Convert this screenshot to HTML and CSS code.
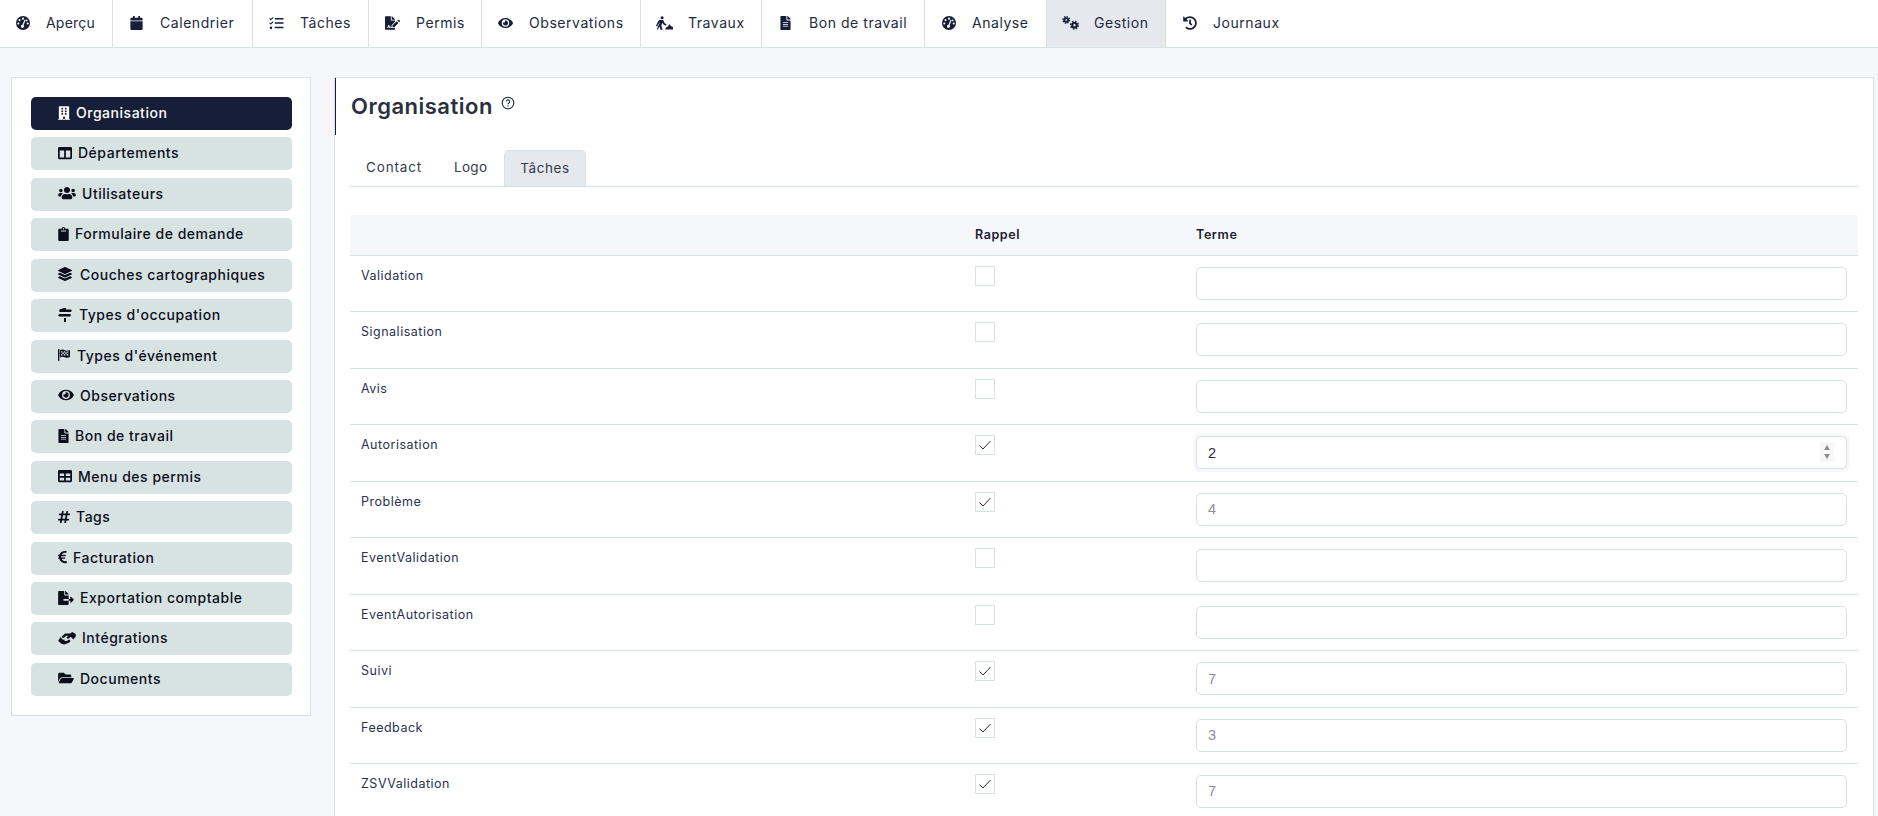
FILE: index.html
```html
<!DOCTYPE html>
<html lang="fr">
<head>
<meta charset="utf-8">
<title>Organisation</title>
<link rel="stylesheet" href="styles.css">
</head>
<body>
<nav class="topnav">
  <a class="toptab toptab-first"><span class="topicon"><svg class="ic w14" viewBox="0 0 512 512"><circle cx="256" cy="256" r="256" fill="currentColor"/><g fill="#fff"><circle cx="256" cy="96" r="38"/><circle cx="130" cy="150" r="38"/><circle cx="84" cy="276" r="38"/><circle cx="428" cy="276" r="38"/><circle cx="388" cy="160" r="34"/><path d="M236 320l80-190 36 14-74 192a56 56 0 1 1-42-16z"/></g></svg></span>Aperçu</a>
  <a class="toptab"><span class="topicon"><svg class="ic" viewBox="0 0 448 512"><path d="M12 192h424c6.6 0 12 5.4 12 12v260c0 26.5-21.5 48-48 48H48c-26.5 0-48-21.5-48-48V204c0-6.6 5.4-12 12-12zm436-44v-36c0-26.5-21.500-48-48-48h-48V12c0-6.600-5.400-12-12-12h-40c-6.600 0-12 5.400-12 12v52H160V12c0-6.600-5.400-12-12-12h-40c-6.600 0-12 5.400-12 12v52H48C21.500 64 0 85.500 0 112v36c0 6.600 5.400 12 12 12h424c6.600 0 12-5.400 12-12z"/></svg></span>Calendrier</a>
  <a class="toptab"><span class="topicon"><svg class="ic" viewBox="0 0 512 512"><path d="M18 76l30 30 72-72 28 28-100 100-58-58zM18 236l30 30 72-72 28 28-100 100-58-58z"/><circle cx="52" cy="434" r="46"/><path d="M192 72h320v56H192zM192 228h320v56H192zM192 396h320v56H192z"/></svg></span>Tâches</a>
  <a class="toptab"><span class="topicon"><svg class="ic" viewBox="0 0 576 512"><path d="M218.170 424.140c-2.950-5.920-8.090-6.520-10.170-6.520s-7.220.590-10.020 6.190l-7.670 15.340c-6.370 12.780-25.030 11.370-29.480-2.090L144 386.590l-10.610 31.880c-5.890 17.660-22.380 29.530-41 29.530H80c-8.840 0-16-7.160-16-16s7.160-16 16-16h12.390c4.830 0 9.110-3.080 10.640-7.660l18.190-54.640c3.300-9.810 12.440-16.410 22.780-16.410s19.480 6.590 22.770 16.410l13.880 41.640c19.750-16.190 54.060-9.700 66 14.160 1.890 3.780 5.490 5.950 9.360 6.260v-82.120l128-127.090V160H248c-13.200 0-24-10.800-24-24V0H24C10.700 0 0 10.700 0 24v464c0 13.300 10.700 24 24 24h336c13.300 0 24-10.700 24-24v-40l-128-.11c-16.120-.31-30.580-9.280-37.830-23.750zM384 121.900c0-6.300-2.500-12.400-7-16.900L279.100 7c-4.500-4.500-10.600-7-17-7H256v128h128v-6.100zm-96 225.060V416h68.990l161.680-162.780-67.880-67.880L288 346.960zm280.540-179.630l-31.870-31.870c-9.940-9.940-26.070-9.940-36.010 0l-27.250 27.250 67.880 67.880 27.250-27.250c9.950-9.940 9.950-26.070 0-36.010z"/></svg></span>Permis</a>
  <a class="toptab"><span class="topicon"><svg class="ic" viewBox="0 0 576 512"><use href="#i-eye"/></svg></span>Observations</a>
  <a class="toptab"><span class="topicon"><svg class="ic w16" viewBox="0 0 640 512"><circle cx="230" cy="60" r="58"/><path d="M120 140h150l50 120 80 50-26 50-100-60-30-50-44 100 50 162h-76l-56-150 22-120-44 40-46 110-50-26 60-140zM30 500l90-220 40 20-84 200zM500 290l50 70 90 60v82H340l50-82 60-30z"/></svg></span>Travaux</a>
  <a class="toptab"><span class="topicon"><svg class="ic" viewBox="0 0 384 512"><use href="#i-file"/></svg></span>Bon de travail</a>
  <a class="toptab"><span class="topicon"><svg class="ic w14" viewBox="0 0 512 512"><circle cx="256" cy="256" r="256" fill="currentColor"/><g fill="#fff"><circle cx="256" cy="96" r="38"/><circle cx="130" cy="150" r="38"/><circle cx="84" cy="276" r="38"/><circle cx="428" cy="276" r="38"/><circle cx="388" cy="160" r="34"/><path d="M236 320l80-190 36 14-74 192a56 56 0 1 1-42-16z"/></g></svg></span>Analyse</a>
  <a class="toptab is-active"><span class="topicon"><svg class="ic w16" viewBox="0 0 640 512"><g fill="none" stroke="currentColor"><circle cx="160" cy="140" r="70" stroke-width="70"/><circle cx="160" cy="140" r="120" stroke-width="60" stroke-dasharray="50 44"/><circle cx="470" cy="340" r="84" stroke-width="80"/><circle cx="470" cy="340" r="140" stroke-width="60" stroke-dasharray="58 52"/></g></svg></span>Gestion</a>
  <a class="toptab"><span class="topicon"><svg class="ic w14" viewBox="0 0 512 512"><path d="M504 255.531c.253 136.640-111.180 248.372-247.820 248.468-59.015.042-113.223-20.530-155.822-54.911-11.077-8.940-11.905-25.541-1.839-35.607l11.267-11.267c8.609-8.609 22.353-9.551 31.891-1.984C173.062 425.135 212.781 440 256 440c101.705 0 184-82.311 184-184 0-101.705-82.311-184-184-184-48.814 0-93.149 18.969-126.068 49.932l50.754 50.754c10.080 10.080 2.941 27.314-11.313 27.314H24c-8.837 0-16-7.163-16-16V38.627c0-14.254 17.234-21.393 27.314-11.314l49.372 49.372C129.209 34.136 189.552 8 256 8c136.810 0 247.747 110.780 248 247.531zm-180.912 78.784l9.823-12.630c8.138-10.463 6.253-25.542-4.210-33.679L288 256.349V152c0-13.255-10.745-24-24-24h-16c-13.255 0-24 10.745-24 24v135.651l65.409 50.874c10.463 8.137 25.541 6.253 33.679-4.210z"/></svg></span>Journaux</a>
</nav>

<svg class="sprite" aria-hidden="true">
  <symbol id="i-eye" viewBox="0 0 576 512"><path d="M572.520 241.400C518.290 135.590 410.930 64 288 64S57.680 135.640 3.480 241.410a32.350 32.350 0 0 0 0 29.190C57.710 376.410 165.070 448 288 448s230.320-71.640 284.520-177.410a32.350 32.350 0 0 0 0-29.190zM288 400a144 144 0 1 1 144-144 143.930 143.930 0 0 1-144 144zm0-240a95.310 95.310 0 0 0-25.310 3.790 47.850 47.850 0 0 1-66.900 66.900A95.780 95.780 0 1 0 288 160z"/></symbol>
  <symbol id="i-file" viewBox="0 0 384 512"><path d="M224 136V0H24C10.700 0 0 10.700 0 24v464c0 13.300 10.700 24 24 24h336c13.300 0 24-10.700 24-24V160H248c-13.200 0-24-10.800-24-24zm64 236c0 6.600-5.400 12-12 12H108c-6.600 0-12-5.400-12-12v-8c0-6.600 5.400-12 12-12h168c6.600 0 12 5.400 12 12v8zm0-64c0 6.600-5.400 12-12 12H108c-6.600 0-12-5.400-12-12v-8c0-6.600 5.400-12 12-12h168c6.600 0 12 5.400 12 12v8zm0-72v8c0 6.600-5.400 12-12 12H108c-6.600 0-12-5.400-12-12v-8c0-6.600 5.400-12 12-12h168c6.600 0 12 5.400 12 12zm96-114.100v6.100H256V0h6.100c6.400 0 12.500 2.500 17 7l97.900 98c4.500 4.500 7 10.600 7 16.900z"/></symbol>
</svg>

<div class="content">
  <aside class="sidebar">
    <a class="sidelink is-active"><svg class="si w12" viewBox="0 0 448 512"><path d="M436 480h-20V24c0-13.255-10.745-24-24-24H56C42.745 0 32 10.745 32 24v456H12c-6.627 0-12 5.373-12 12v20h448v-20c0-6.627-5.373-12-12-12zM128 76c0-6.627 5.373-12 12-12h40c6.627 0 12 5.373 12 12v40c0 6.627-5.373 12-12 12h-40c-6.627 0-12-5.373-12-12V76zm0 96c0-6.627 5.373-12 12-12h40c6.627 0 12 5.373 12 12v40c0 6.627-5.373 12-12 12h-40c-6.627 0-12-5.373-12-12v-40zm52 148h-40c-6.627 0-12-5.373-12-12v-40c0-6.627 5.373-12 12-12h40c6.627 0 12 5.373 12 12v40c0 6.627-5.373 12-12 12zm76 160h-64v-84c0-6.627 5.373-12 12-12h40c6.627 0 12 5.373 12 12v84zm64-172c0 6.627-5.373 12-12 12h-40c-6.627 0-12-5.373-12-12v-40c0-6.627 5.373-12 12-12h40c6.627 0 12 5.373 12 12v40zm0-96c0 6.627-5.373 12-12 12h-40c-6.627 0-12-5.373-12-12v-40c0-6.627 5.373-12 12-12h40c6.627 0 12 5.373 12 12v40zm0-96c0 6.627-5.373 12-12 12h-40c-6.627 0-12-5.373-12-12V76c0-6.627 5.373-12 12-12h40c6.627 0 12 5.373 12 12v40z"/></svg>Organisation</a>
    <a class="sidelink"><svg class="si w14" viewBox="0 0 512 512"><path d="M464 32H48C21.490 32 0 53.490 0 80v352c0 26.510 21.490 48 48 48h416c26.510 0 48-21.490 48-48V80c0-26.510-21.490-48-48-48zM224 416H64V160h160v256zm224 0H288V160h160v256z"/></svg>Départements</a>
    <a class="sidelink"><svg class="si w17" viewBox="0 0 640 512"><path d="M96 224c35.300 0 64-28.700 64-64s-28.700-64-64-64-64 28.700-64 64 28.700 64 64 64zm448 0c35.300 0 64-28.700 64-64s-28.700-64-64-64-64 28.700-64 64 28.700 64 64 64zm32 32h-64c-17.600 0-33.500 7.100-45.100 18.600 40.300 22.100 68.900 62 75.100 109.400h66c17.700 0 32-14.300 32-32v-32c0-35.300-28.700-64-64-64zm-256 0c61.900 0 112-50.100 112-112S381.900 32 320 32 208 82.100 208 144s50.100 112 112 112zm76.800 32h-8.300c-20.800 10-43.900 16-68.500 16s-47.600-6-68.500-16h-8.300C179.600 288 128 339.600 128 403.200V432c0 26.500 21.500 48 48 48h288c26.500 0 48-21.500 48-48v-28.800c0-63.600-51.600-115.200-115.200-115.200zm-223.700-13.400C161.500 263.100 145.600 256 128 256H64c-35.300 0-64 28.700-64 64v32c0 17.700 14.300 32 32 32h65.900c6.300-47.400 34.900-87.300 75.200-109.400z"/></svg>Utilisateurs</a>
    <a class="sidelink"><svg class="si w11" viewBox="0 0 384 512"><path d="M384 112v352c0 26.510-21.490 48-48 48H48c-26.510 0-48-21.490-48-48V112c0-26.510 21.490-48 48-48h80c0-35.290 28.710-64 64-64s64 28.710 64 64h80c26.510 0 48 21.490 48 48zM192 40c-13.255 0-24 10.745-24 24s10.745 24 24 24 24-10.745 24-24-10.745-24-24-24m96 114v-20a6 6 0 0 0-6-6H102a6 6 0 0 0-6 6v20a6 6 0 0 0 6 6h180a6 6 0 0 0 6-6z"/></svg>Formulaire de demande</a>
    <a class="sidelink"><svg class="si w14 wide-gap" viewBox="0 0 512 512"><path d="M12.410 148.020l232.940 105.670c6.800 3.090 14.490 3.090 21.290 0l232.940-105.670c16.550-7.510 16.550-32.520 0-40.030L266.650 2.310a25.607 25.607 0 0 0-21.290 0L12.410 107.980c-16.550 7.510-16.550 32.530 0 40.040zm487.180 88.280l-58.090-26.330-161.640 73.270c-7.560 3.430-15.590 5.170-23.860 5.170s-16.290-1.740-23.860-5.170L70.510 209.970l-58.100 26.330c-16.550 7.500-16.550 32.500 0 40l232.940 105.590c6.800 3.080 14.490 3.080 21.290 0L499.590 276.300c16.550-7.500 16.550-32.500 0-40zm0 127.800l-57.870-26.230-161.860 73.370c-7.560 3.430-15.590 5.170-23.860 5.170s-16.290-1.740-23.860-5.170L70.290 337.870 12.410 364.100c-16.550 7.500-16.550 32.500 0 40l232.940 105.590c6.800 3.080 14.490 3.080 21.290 0L499.590 404.100c16.550-7.500 16.550-32.500 0-40z"/></svg>Couches cartographiques</a>
    <a class="sidelink"><svg class="si w14 near-gap" viewBox="0 0 512 512"><path d="M220 0h72v56h170l50 46-50 46H50V56h0zM0 264l50-46h412v92H50zM220 364h72v148h-72z"/><path d="M220 56h72v10h-72z"/></svg>Types d'occupation</a>
    <a class="sidelink"><svg class="si w12 near-gap" viewBox="0 0 512 512"><path fill-rule="evenodd" d="M0 0h56v512H0zM80 50c80-40 150-30 210 0s120 30 222-10v300c-90 45-160 40-222 10s-130-30-210 10zM130 92v60h60v-60zm120 0v60h60v-60zm120 10v60h70v-60zM190 152v60h60v-60zm120 0v60h60v-60zM130 212v60h60v-60zm120 0v60h60v-60zm120 0v60h70v-60z"/></svg>Types d'événement</a>
    <a class="sidelink"><svg class="si w16" viewBox="0 0 576 512"><use href="#i-eye"/></svg>Observations</a>
    <a class="sidelink"><svg class="si w11" viewBox="0 0 384 512"><use href="#i-file"/></svg>Bon de travail</a>
    <a class="sidelink"><svg class="si w14" viewBox="0 0 512 512"><path d="M464 32H48C21.490 32 0 53.490 0 80v352c0 26.510 21.490 48 48 48h416c26.510 0 48-21.490 48-48V80c0-26.510-21.490-48-48-48zM224 416H64v-96h160v96zm0-160H64v-96h160v96zm224 160H288v-96h160v96zm0-160H288v-96h160v96z"/></svg>Menu des permis</a>
    <a class="sidelink"><svg class="si w12" viewBox="0 0 448 512"><path d="M440.667 182.109l7.143-40c1.313-7.355-4.342-14.109-11.813-14.109h-74.810l14.623-81.891C377.123 38.754 371.468 32 363.997 32h-40.632a12 12 0 0 0-11.813 9.891L296.175 128H197.540l14.623-81.891C213.477 38.754 207.822 32 200.350 32h-40.632a12 12 0 0 0-11.813 9.891L132.528 128H53.432a12 12 0 0 0-11.813 9.891l-7.143 40C33.163 185.246 38.818 192 46.289 192h74.810L98.242 320H19.146a12 12 0 0 0-11.813 9.891l-7.143 40C-1.123 377.246 4.532 384 12.003 384h74.810L72.190 465.891C70.877 473.246 76.532 480 84.003 480h40.632a12 12 0 0 0 11.813-9.891L151.826 384h98.634l-14.623 81.891C234.523 473.246 240.178 480 247.650 480h40.632a12 12 0 0 0 11.813-9.891L315.472 384h79.096a12 12 0 0 0 11.813-9.891l7.143-40c1.313-7.355-4.342-14.109-11.813-14.109h-74.810l22.857-128h79.096a12 12 0 0 0 11.813-9.891zM261.889 320h-98.634l22.857-128h98.634l-22.857 128z"/></svg>Tags</a>
    <a class="sidelink"><svg class="si w9" viewBox="0 0 320 512"><path d="M310.706 413.765c-1.314-6.630-7.835-10.872-14.424-9.369-10.692 2.439-27.422 5.413-45.426 5.413-56.763 0-101.929-34.790-121.461-85.449h113.689a12 12 0 0 0 11.708-9.369l6.373-28.360c1.686-7.502-4.019-14.631-11.708-14.631H115.220c-1.210-14.328-1.414-28.287.137-42.245H261.950a12 12 0 0 0 11.723-9.434l6.512-29.755c1.638-7.484-4.061-14.566-11.723-14.566H130.184c20.633-44.991 62.690-75.030 117.619-75.030 14.486 0 28.564 2.250 37.851 4.145 6.216 1.268 12.347-2.498 14.002-8.623l11.991-44.368c1.822-6.741-2.465-13.616-9.326-14.917C290.217 34.912 270.710 32 249.635 32 152.451 32 74.030 92.252 45.075 176H12c-6.627 0-12 5.373-12 12v29.755c0 6.627 5.373 12 12 12h21.569c-1.009 13.607-1.181 29.287-.181 42.245H12c-6.627 0-12 5.373-12 12v28.360c0 6.627 5.373 12 12 12h30.114C67.139 414.692 145.264 480 249.635 480c26.301 0 48.562-4.544 61.101-7.788 6.167-1.595 10.027-7.708 8.788-13.957l-8.818-44.490z"/></svg>Facturation</a>
    <a class="sidelink"><svg class="si w16" viewBox="0 0 576 512"><path d="M384 121.900c0-6.300-2.500-12.400-7-16.900L279.100 7c-4.500-4.500-10.600-7-17-7H256v128h128zM571 308l-95.700-96.400c-10.100-10.100-27.400-3-27.400 11.300V288h-64v64h64v65.200c0 14.300 17.300 21.400 27.400 11.300L571 332c6.600-6.600 6.600-17.400 0-24zm-379 28v-32c0-8.800 7.200-16 16-16h176V160H248c-13.200 0-24-10.800-24-24V0H24C10.700 0 0 10.700 0 24v464c0 13.300 10.700 24 24 24h336c13.300 0 24-10.700 24-24V352H208c-8.800 0-16-7.200-16-16z"/></svg>Exportation comptable</a>
    <a class="sidelink"><svg class="si w17" viewBox="0 0 640 512"><path d="M250 90h190l70-50 130 70v90l-90 110-90-100-80 60c-30 20-70 10-80-30l70-70H290L200 260h-40l-30-60zM80 220l90 100h80l-30 50h90l90-60 50 60-60 60-170 60-100-20-120-100z"/></svg>Intégrations</a>
    <a class="sidelink"><svg class="si w16" viewBox="0 0 576 512"><path d="M572.694 292.093L500.270 416.248A63.997 63.997 0 0 1 444.989 448H45.025c-18.523 0-30.064-20.093-20.731-36.093l72.424-124.155A64 64 0 0 1 152 256h399.964c18.523 0 30.064 20.093 20.730 36.093zM152 224h328v-48c0-26.510-21.490-48-48-48H272l-64-64H48C21.490 64 0 85.490 0 112v278.046l69.077-118.418C86.214 242.250 117.989 224 152 224z"/></svg>Documents</a>
  </aside>

  <main class="panel">
    <header class="panel-head">
      <h1 class="panel-title">Organisation</h1>
      <svg class="help" viewBox="0 0 14 14"><circle cx="7" cy="7" r="5.8" fill="none" stroke="currentColor" stroke-width="1.100"/><path d="M5.300 5.600a1.700 1.700 0 1 1 2.600 1.400c-.6.400-.9.700-.9 1.300" fill="none" stroke="currentColor" stroke-width="1.100"/><circle cx="7" cy="10" r=".7" fill="currentColor"/></svg>
    </header>
    <div class="panel-body">
      <div class="tabs">
        <a class="tab tab-contact">Contact</a>
        <a class="tab tab-logo">Logo</a>
        <a class="tab tab-tasks is-active">Tâches</a>
      </div>
      <div class="grid-head">
        <span></span><span>Rappel</span><span>Terme</span>
      </div>
      <div class="row"><span class="row-label">Validation</span><span class="check"></span><input class="field" type="text"></div>
      <div class="row"><span class="row-label">Signalisation</span><span class="check"></span><input class="field" type="text"></div>
      <div class="row"><span class="row-label">Avis</span><span class="check"></span><input class="field" type="text"></div>
      <div class="row"><span class="row-label">Autorisation</span><span class="check is-on"><svg viewBox="0 0 18 18"><path d="M3.500 9.500l3.500 3.500 7.500-8"/></svg></span><span class="field-wrap"><input class="field is-focus" type="text" value="2"><span class="spin"><i class="up"></i><i class="down"></i></span></span></div>
      <div class="row"><span class="row-label">Problème</span><span class="check is-on"><svg viewBox="0 0 18 18"><path d="M3.500 9.500l3.500 3.500 7.500-8"/></svg></span><input class="field" type="text" value="4"></div>
      <div class="row"><span class="row-label">EventValidation</span><span class="check"></span><input class="field" type="text"></div>
      <div class="row"><span class="row-label">EventAutorisation</span><span class="check"></span><input class="field" type="text"></div>
      <div class="row"><span class="row-label">Suivi</span><span class="check is-on"><svg viewBox="0 0 18 18"><path d="M3.500 9.500l3.500 3.500 7.500-8"/></svg></span><input class="field" type="text" value="7"></div>
      <div class="row"><span class="row-label">Feedback</span><span class="check is-on"><svg viewBox="0 0 18 18"><path d="M3.500 9.500l3.500 3.500 7.500-8"/></svg></span><input class="field" type="text" value="3"></div>
      <div class="row"><span class="row-label">ZSVValidation</span><span class="check is-on"><svg viewBox="0 0 18 18"><path d="M3.500 9.500l3.500 3.500 7.500-8"/></svg></span><input class="field" type="text" value="7"></div>
    </div>
  </main>
</div>
</body>
</html>
```
FILE: styles.css
```css
* { box-sizing: border-box; }
html, body { height: 100%; margin: 0; overflow: hidden; }
body {
  background: #f5f7fa;
  color: #161e38;
  font-family: Inter, "Liberation Sans", sans-serif;
}
.sprite { display: none; }

.topnav {
  display: grid;
  grid-template-columns: 113px 140px 116px 113px 159px 121px 163px 122px 119px 130px;
  justify-content: start;
  height: 48px;
  background: #fff;
  border-bottom: 1px solid #d7e2e3;
}
.toptab {
  display: flex;
  align-items: center;
  padding: 0 0 2px 15px;
  font-size: 14px;
  letter-spacing: .55px;
  color: #232a41;
  border-right: 1px solid #d7e2e3;
}
.toptab:last-child { border-right: 0; }
.toptab.is-active { background: #e5e8ec; }
.toptab-first { padding-left: 14px; letter-spacing: .2px; }
.topicon { width: 17px; margin-right: 15px; display: flex; justify-content: center; }
.ic { width: 15px; height: 14px; fill: #161e38; color: #161e38; flex: none; }
.ic.w14 { width: 14px; }
.ic.w16 { width: 17px; }

.content {
  display: flex;
  align-items: flex-start;
  gap: 23px;
  padding: 29px 4px 0 11px;
  height: calc(100% - 48px);
}
.sidebar {
  flex: none;
  width: 300px;
  padding: 19px 18px 19px 19px;
  background: #fff;
  border: 1px solid #d7e2e3;
  display: flex;
  flex-direction: column;
  gap: 7.43px;
}
.sidelink {
  display: flex;
  align-items: center;
  gap: 6px;
  height: 33px;
  padding: 0 0 2px 27px;
  background: #d7e2e3;
  border-radius: 5px;
  font-size: 14px;
  font-weight: 500;
  letter-spacing: .52px;
  color: #0c0f1a;
}
.sidelink.is-active { background: #161e38; color: #fff; }
.si { height: 14px; fill: currentColor; flex: none; }
.si.w9 { width: 9px; }
.si.w11 { width: 11px; }
.si.w12 { width: 12px; }
.si.w14 { width: 14px; }
.si.w16 { width: 16px; }
.si.w17 { width: 18px; }
.si.wide-gap { margin-right: 2px; }
.si.near-gap { margin-right: 1px; }

.panel {
  flex: 1;
  height: 800px;
  background: #fff;
  border: 1px solid #d7e2e3;
}
.panel-head {
  display: flex;
  align-items: flex-start;
  height: 57px;
  padding: 15px 0 0 15px;
  border-left: 1px solid #161e38;
}
.panel-title {
  margin: 0;
  font-size: 22px;
  font-weight: 600;
  line-height: 26px;
  letter-spacing: .5px;
  color: #2a3040;
}
.help { width: 14px; height: 14px; margin: 3px 0 0 8px; color: #232a41; }
.panel-body { padding: 15px 15px 0 15px; }

.tabs {
  display: flex;
  height: 37px;
  border-bottom: 1px solid #d7e2e3;
  margin-bottom: 28px;
}
.tab {
  display: flex;
  align-items: center;
  height: 36px;
  padding-bottom: 2px;
  font-size: 13.500px;
  letter-spacing: .55px;
  color: #363b4c;
}
.tab-contact { padding-left: 16px; width: 104px; letter-spacing: .85px; }
.tab-logo { width: 50px; letter-spacing: .3px; }
.tab-tasks { width: 82px; justify-content: center; }
.tab.is-active {
  background: #e5e8ec;
  border: 1px solid #d7e2e3;
  border-bottom: 0;
  border-radius: 5px 5px 0 0;
}

.grid-head, .row {
  display: grid;
  grid-template-columns: 625px 221px 1fr;
  align-items: start;
}
.grid-head {
  height: 41px;
  padding: 11px 11px 0 0;
  background: #f5f7fa;
  border-bottom: 1px solid #d7e2e3;
  font-size: 12.500px;
  font-weight: 600;
  line-height: 18px;
  letter-spacing: .6px;
  color: #1b2033;
}
.row {
  height: 56.45px;
  padding: 10px 11px 0 0;
  border-bottom: 1px solid #d7e2e3;
}
.row-label {
  padding-left: 11px;
  font-size: 12.500px;
  line-height: 20px;
  letter-spacing: .5px;
  color: #2b3150;
}
.check {
  display: block;
  width: 20px;
  height: 20px;
  border: 1px solid #d7e2e3;
  background: #fff;
}
.check svg { display: block; width: 18px; height: 18px; fill: none; stroke: #333; stroke-width: 1; }
.field {
  display: block;
  width: 100%;
  height: 33px;
  margin-top: 1px;
  padding: 0 11px;
  background: #fff;
  border: 1px solid #d7e2e3;
  border-radius: 5px;
  outline: 0;
  font-family: "Liberation Sans", sans-serif;
  font-size: 14.500px;
  color: #8c8f96;
}
.field-wrap { position: relative; display: block; }
.field.is-focus { color: #2b2f3a; box-shadow: 0 0 0 3px #f6f6fb; }
.spin {
  position: absolute;
  top: 7px;
  right: 13px;
  width: 14px;
  height: 20px;
  display: flex;
  flex-direction: column;
  align-items: center;
  justify-content: center;
  gap: 4px;
  background: #f7f7fa;
}
.spin i { display: block; width: 0; height: 0; border-left: 3.500px solid transparent; border-right: 3.500px solid transparent; }
.spin .up { border-bottom: 5px solid #8e8e8e; }
.spin .down { border-top: 5px solid #8e8e8e; }
```
